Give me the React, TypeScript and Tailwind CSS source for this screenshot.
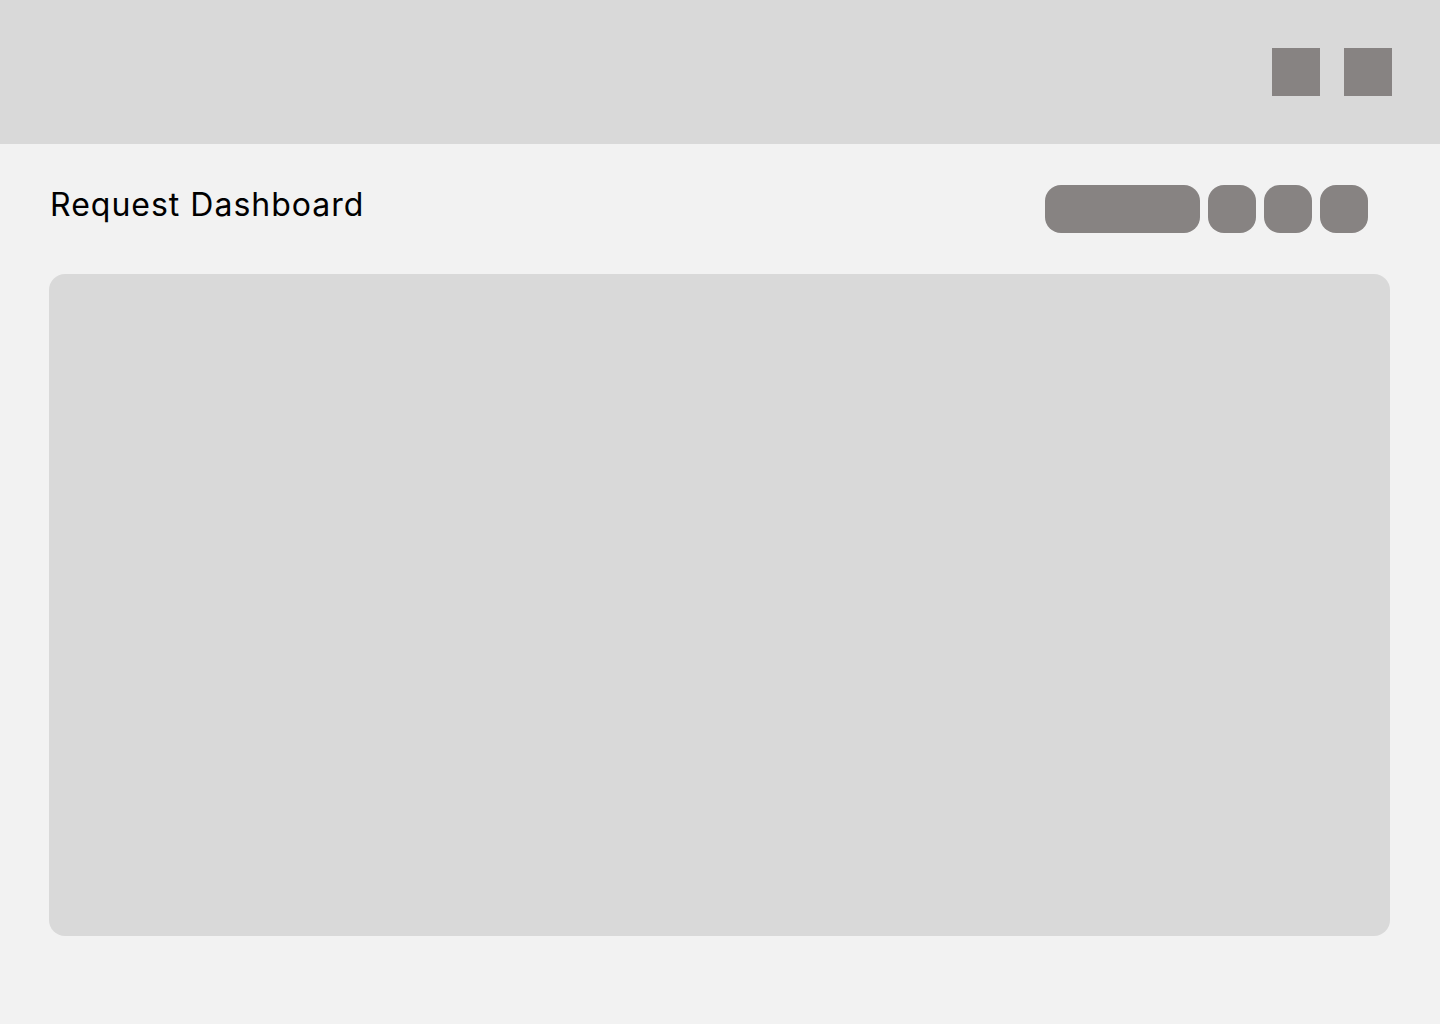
export default function App() {
  return (
    <div className="min-h-[1024px] w-[1440px] bg-[#f2f2f2]" style={{ fontFamily: 'Inter, "Open Sans", "Liberation Sans", sans-serif' }}>
      <header className="flex h-[144px] items-center justify-end gap-[24px] bg-[#d9d9d9] pr-[48px]">
        <div className="h-[48px] w-[48px] bg-[#878382]" />
        <div className="h-[48px] w-[48px] bg-[#878382]" />
      </header>
      <main className="pl-[49px] pr-[50px]">
        <div className="mt-[41px] flex h-[48px] items-center justify-between pr-[22px]">
          <h1 className="ml-[1px] -mt-[9px] text-[32px] leading-[48px] font-normal tracking-[1px] text-black">Request Dashboard</h1>
          <div className="flex gap-[8px]">
            <div className="h-[48px] w-[155px] rounded-[16px] bg-[#878382]" />
            <div className="h-[48px] w-[48px] rounded-[16px] bg-[#878382]" />
            <div className="h-[48px] w-[48px] rounded-[16px] bg-[#878382]" />
            <div className="h-[48px] w-[48px] rounded-[16px] bg-[#878382]" />
          </div>
        </div>
        <div className="mt-[41px] h-[662px] rounded-[16px] bg-[#d9d9d9]" />
      </main>
    </div>
  );
}
